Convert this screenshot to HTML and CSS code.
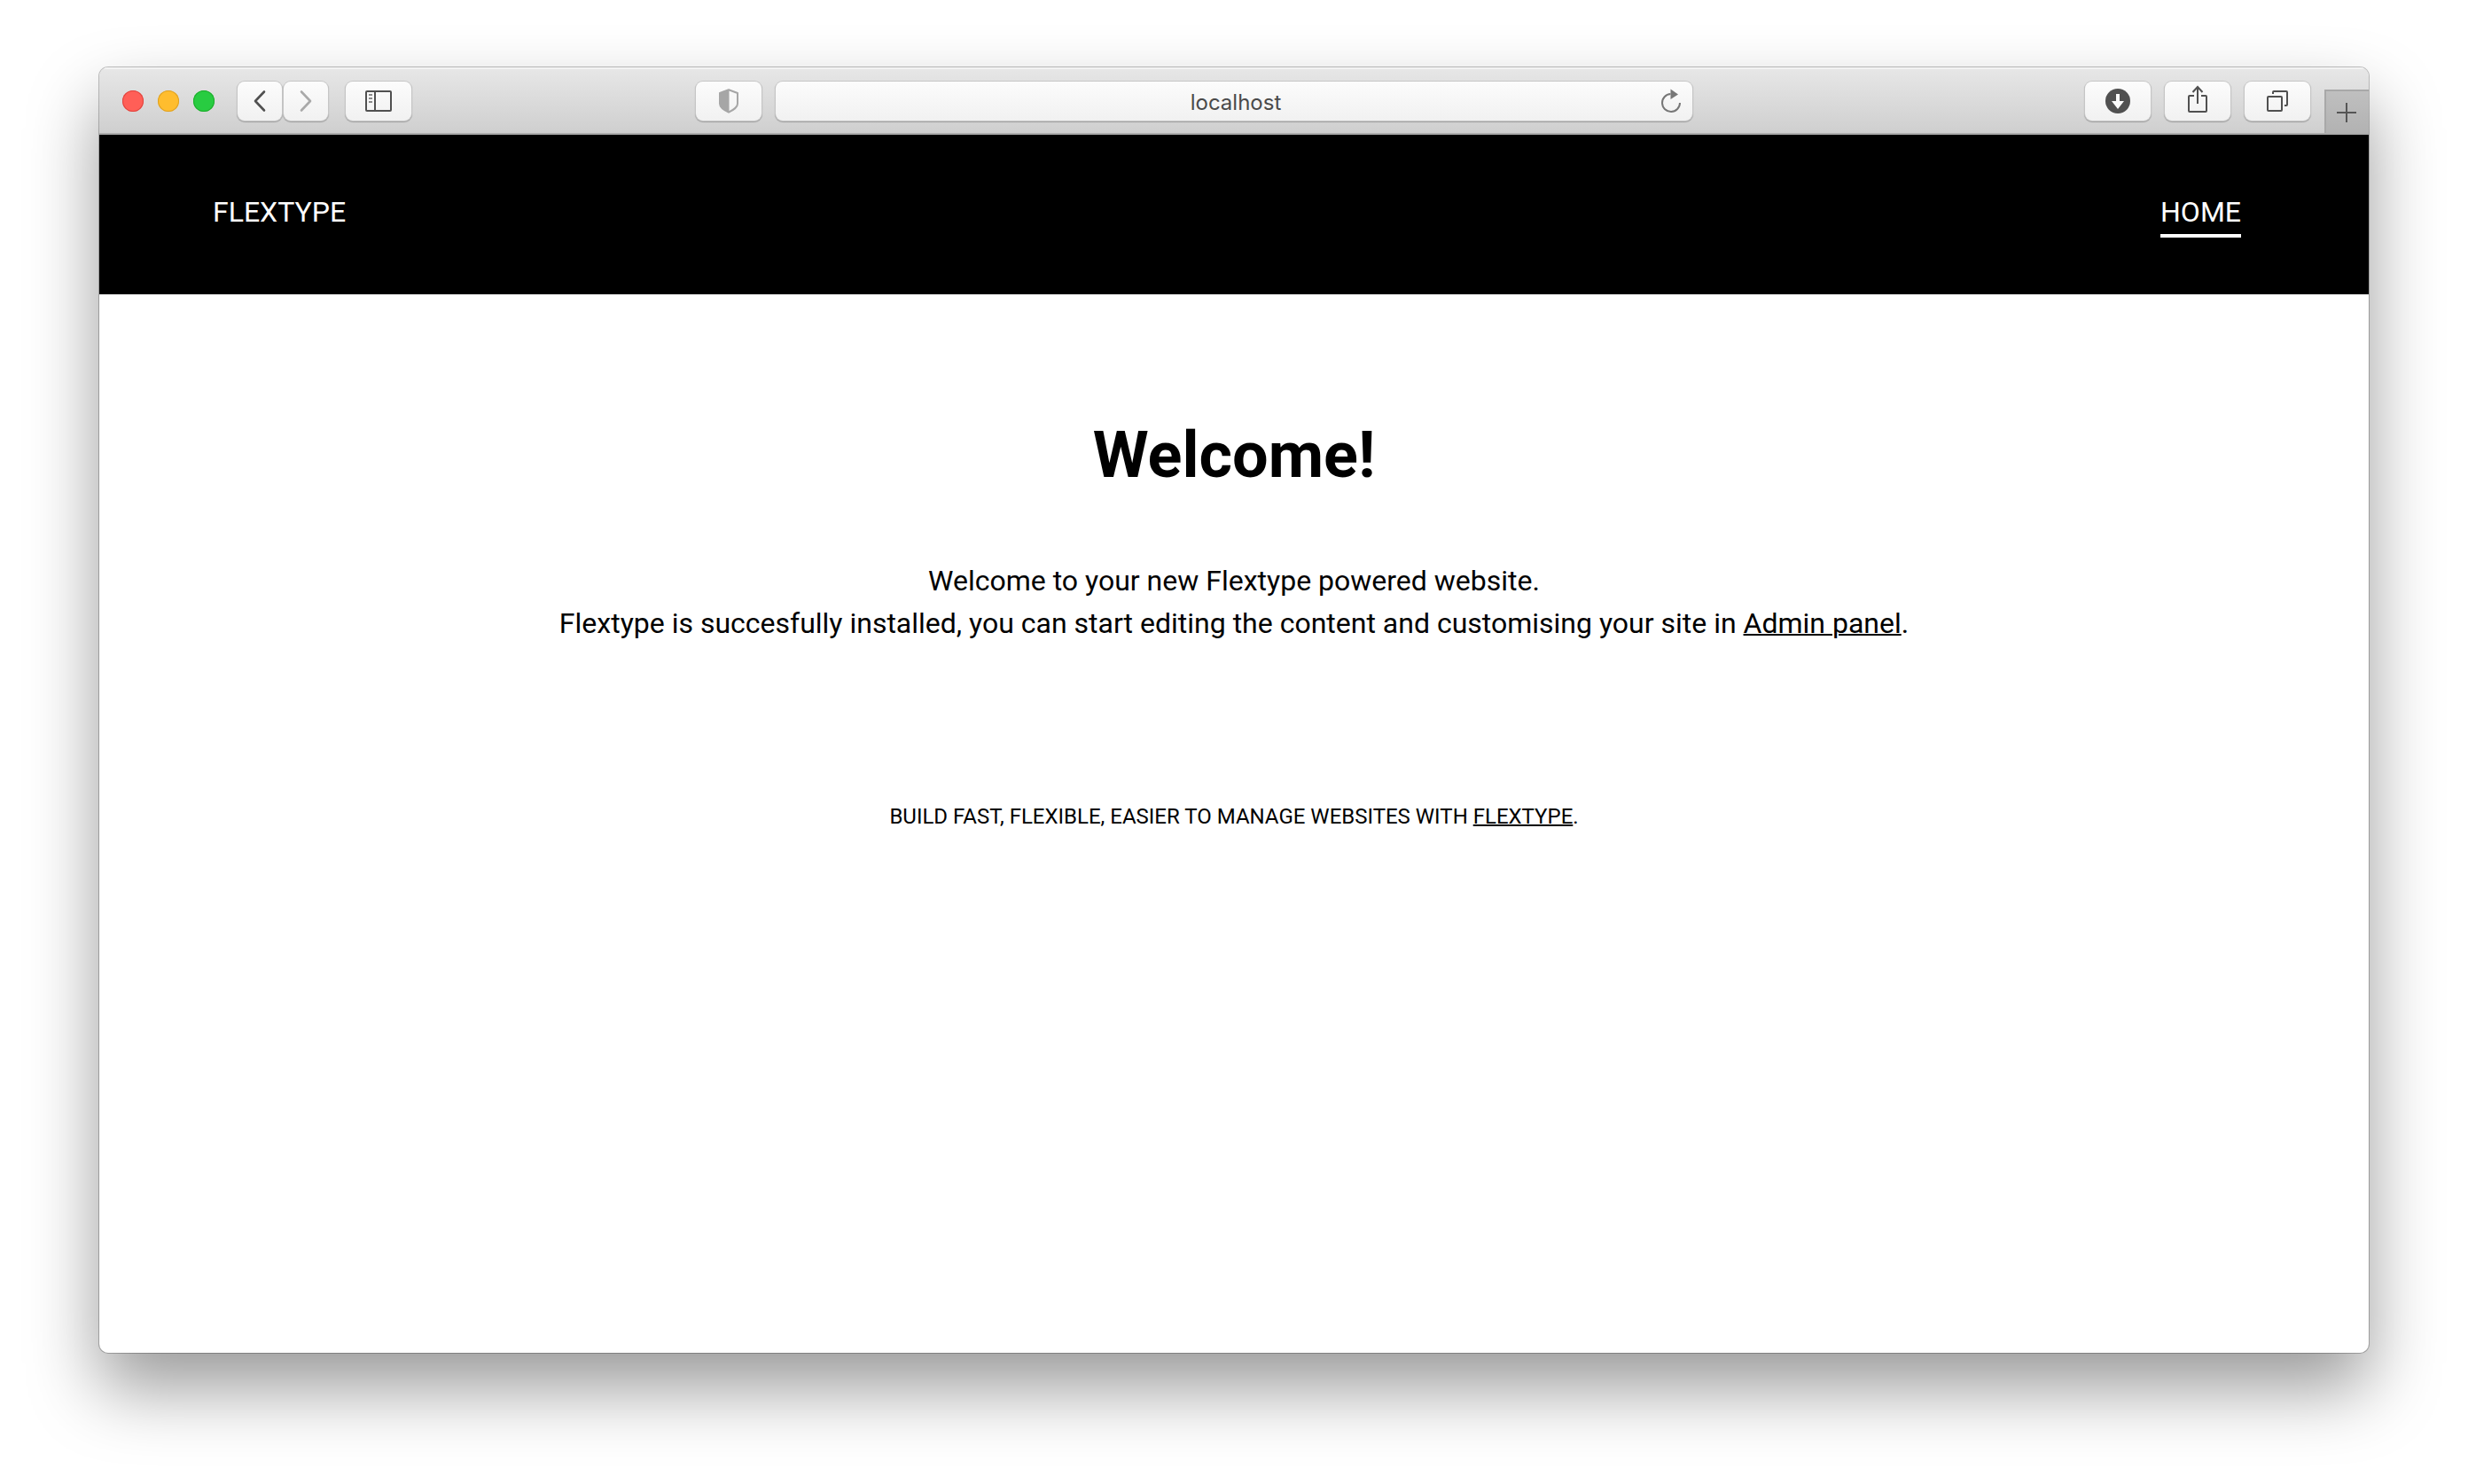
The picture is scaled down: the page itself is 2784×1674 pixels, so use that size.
FILE: index.html
```html
<!DOCTYPE html>
<html lang="en">
<head>
<meta charset="utf-8">
<meta name="viewport" content="width=device-width, initial-scale=1">
<title>Flextype</title>
<link rel="stylesheet" href="styles.css">
</head>
<body>
<div class="window">
  <div class="toolbar">
    <div class="toolbar-start">
      <div class="lights">
        <button class="light light-close" aria-label="Close"></button>
        <button class="light light-minimize" aria-label="Minimize"></button>
        <button class="light light-zoom" aria-label="Zoom"></button>
      </div>
      <div class="history">
        <button class="tool tool-narrow" aria-label="Back">
          <svg width="16" height="26" viewBox="0 0 16 26"><path d="M13 2.5 3 13l10 10.500" fill="none" stroke="#505050" stroke-width="2.600" stroke-linecap="round" stroke-linejoin="round"/></svg>
        </button>
        <button class="tool tool-narrow" aria-label="Forward">
          <svg width="16" height="26" viewBox="0 0 16 26"><path d="M3 2.500 13 13 3 23.500" fill="none" stroke="#a9a9a9" stroke-width="2.600" stroke-linecap="round" stroke-linejoin="round"/></svg>
        </button>
      </div>
      <button class="tool" aria-label="Show sidebar">
        <svg width="30" height="24" viewBox="0 0 30 24"><g fill="none" stroke="#505050" stroke-width="2"><rect x="1" y="1" width="28" height="22" rx="1"/><path d="M11 1v22"/></g><path d="M4 5h4M4 9h4M4 13h4" stroke="#8a8a8a" stroke-width="2"/></svg>
      </button>
      <button class="tool privacy" aria-label="Privacy report">
        <svg width="24" height="28" viewBox="0 0 24 28"><path d="M12 1.300 22 5v12c0 4-4 6.500-10 9.700C6 23.500 2 21 2 17V5z" fill="none" stroke="#a6a6a6" stroke-width="2" stroke-linejoin="round"/><path d="M12.500 1v26C6 23.500 2 21 2 17V5z" fill="#a6a6a6"/></svg>
      </button>
    </div>
    <div class="address">
      <input class="address-input" type="text" value="localhost" aria-label="Address">
      <button class="reload" aria-label="Reload">
        <svg width="24" height="28" viewBox="0 0 24 28"><path d="M11.500 6A10 10 0 1 0 22 16" fill="none" stroke="#777" stroke-width="2"/><path d="M11.500 .500v11.500L20 6.500z" fill="#777"/></svg>
      </button>
    </div>
    <div class="toolbar-end">
      <button class="tool" aria-label="Downloads">
        <svg width="28" height="28" viewBox="0 0 28 28"><circle cx="14" cy="14" r="14" fill="#505050"/><path d="M12 6h4v8h5l-7 9-7-9h5z" fill="#fafafa"/></svg>
      </button>
      <button class="tool share" aria-label="Share">
        <svg width="24" height="32" viewBox="0 0 24 32"><g fill="none" stroke="#505050" stroke-width="2"><path d="M8 12H3q-1 0-1 1v16q0 1 1 1h18q1 0 1-1V13q0-1-1-1h-5"/><path d="M12 21V2M6.500 8 12 2l5.500 6"/></g></svg>
      </button>
      <button class="tool" aria-label="Show tabs">
        <svg width="26" height="24" viewBox="0 0 26 24"><g fill="none" stroke="#505050" stroke-width="2"><rect x="2" y="7" width="16" height="16" rx="1"/><path d="M8 4V2q0-1 1-1h14q1 0 1 1v14q0 1-1 1h-2"/></g></svg>
      </button>
      <button class="new-tab" aria-label="New tab">
        <svg width="22" height="22" viewBox="0 0 22 22"><path d="M11 0v22M0 11h22" stroke="#555" stroke-width="2"/></svg>
      </button>
    </div>
  </div>
  <header class="site-header">
    <a class="brand" href="#">FLEXTYPE</a>
    <nav><a class="nav-link" href="#" aria-current="page">HOME</a></nav>
  </header>
  <main class="content">
    <h1 class="title">Welcome!</h1>
    <p class="intro">Welcome to your new Flextype powered website.<br>Flextype is succesfully installed, you can start editing the content and customising your site in <a href="#">Admin panel</a>.</p>
  </main>
  <footer class="site-footer">BUILD FAST, FLEXIBLE, EASIER TO MANAGE WEBSITES WITH <a href="#">FLEXTYPE</a>.</footer>
</div>
</body>
</html>
```
FILE: styles.css
```css
* {
  box-sizing: border-box;
}

body {
  margin: 0;
  min-height: 100vh;
  padding: 76px 112px 148px;
  display: flex;
  background: #fff;
  color: #000;
  font-family: Roboto, "Liberation Sans", sans-serif;
  font-size: 32px;
  line-height: 48px;
}

a {
  color: inherit;
}

button {
  margin: 0;
  padding: 0;
  border: 0;
  background: none;
  font: inherit;
}

svg {
  display: block;
}

.window {
  flex: 1;
  min-width: 0;
  overflow: hidden;
  border-radius: 10px;
  background: #fff;
  box-shadow: 0 0 0 1px rgba(0, 0, 0, 0.24), 0 40px 80px rgba(0, 0, 0, 0.4);
}

/* Browser toolbar */

.toolbar {
  height: 76px;
  padding-top: 2px;
  display: grid;
  grid-template-columns: 13fr 18fr 13fr;
  gap: 16px;
  align-items: center;
  border-bottom: 2px solid #acacac;
  background: linear-gradient(#e7e7e7, #cfcfcf);
  box-shadow: inset 0 2px 0 #f3f3f3;
}

.toolbar-start,
.toolbar-end {
  height: 72px;
  display: flex;
  align-items: center;
}

.toolbar-start {
  padding-left: 26px;
}

.lights {
  display: flex;
  gap: 16px;
  margin-right: 26px;
}

.light {
  width: 24px;
  height: 24px;
  border-radius: 50%;
}

.light-close {
  background: #ff5f57;
  box-shadow: inset 0 0 0 1px #e0443e;
}

.light-minimize {
  background: #ffbd2e;
  box-shadow: inset 0 0 0 1px #dea123;
}

.light-zoom {
  background: #28cc41;
  box-shadow: inset 0 0 0 1px #1dad2b;
}

.history {
  display: flex;
  gap: 2px;
  margin-right: 20px;
}

.tool,
.address {
  height: 44px;
  border-radius: 8px;
  background: linear-gradient(#fcfcfc, #f1f1f1);
  box-shadow: 0 0 0 1px #c6c6c6, 0 1px 1px 1px #a0a0a0;
}

.tool {
  width: 74px;
  display: grid;
  place-items: center;
}

.tool-narrow {
  width: 50px;
}

.privacy {
  margin-left: auto;
}

.address {
  display: grid;
  grid-template-columns: 48px 1fr 48px;
  align-items: center;
}

.address-input {
  grid-column: 2;
  width: 100%;
  height: 44px;
  padding: 2px 0 0 4px;
  border: 0;
  background: none;
  color: #4a4a4a;
  font-family: Inter, "Liberation Sans", sans-serif;
  font-size: 24px;
  text-align: center;
}

.reload {
  display: grid;
  place-items: center;
}

.toolbar-end {
  justify-content: flex-end;
  gap: 16px;
}

.share svg {
  margin-bottom: 4px;
}

.new-tab {
  width: 50px;
  height: 49px;
  align-self: flex-end;
  display: grid;
  place-items: center;
  border-top: 2px solid #a8a8a8;
  background: linear-gradient(#bfbfbf, #b2b2b2);
  box-shadow: inset 2px 0 0 #a8a8a8;
}

/* Site */

.site-header {
  height: 180px;
  padding: 0 144px 0 128px;
  display: flex;
  align-items: center;
  justify-content: space-between;
  background: #000;
  color: #fff;
  line-height: 46px;
}

.brand,
.nav-link {
  display: block;
  text-decoration: none;
}

.brand {
  padding-bottom: 6px;
}

.nav-link {
  padding-bottom: 2px;
  border-bottom: 4px solid #fff;
}

.content,
.site-footer {
  padding: 0 128px;
  text-align: center;
}

.content {
  padding-top: 137px;
}

.title {
  margin: 0 0 72px;
  font-size: 72px;
  font-weight: 700;
  line-height: 90px;
}

.intro {
  margin: 0;
}

.intro a,
.site-footer a {
  text-decoration-thickness: 2px;
}

.site-footer {
  padding-top: 176px;
  font-size: 24px;
  line-height: 36px;
}
```
